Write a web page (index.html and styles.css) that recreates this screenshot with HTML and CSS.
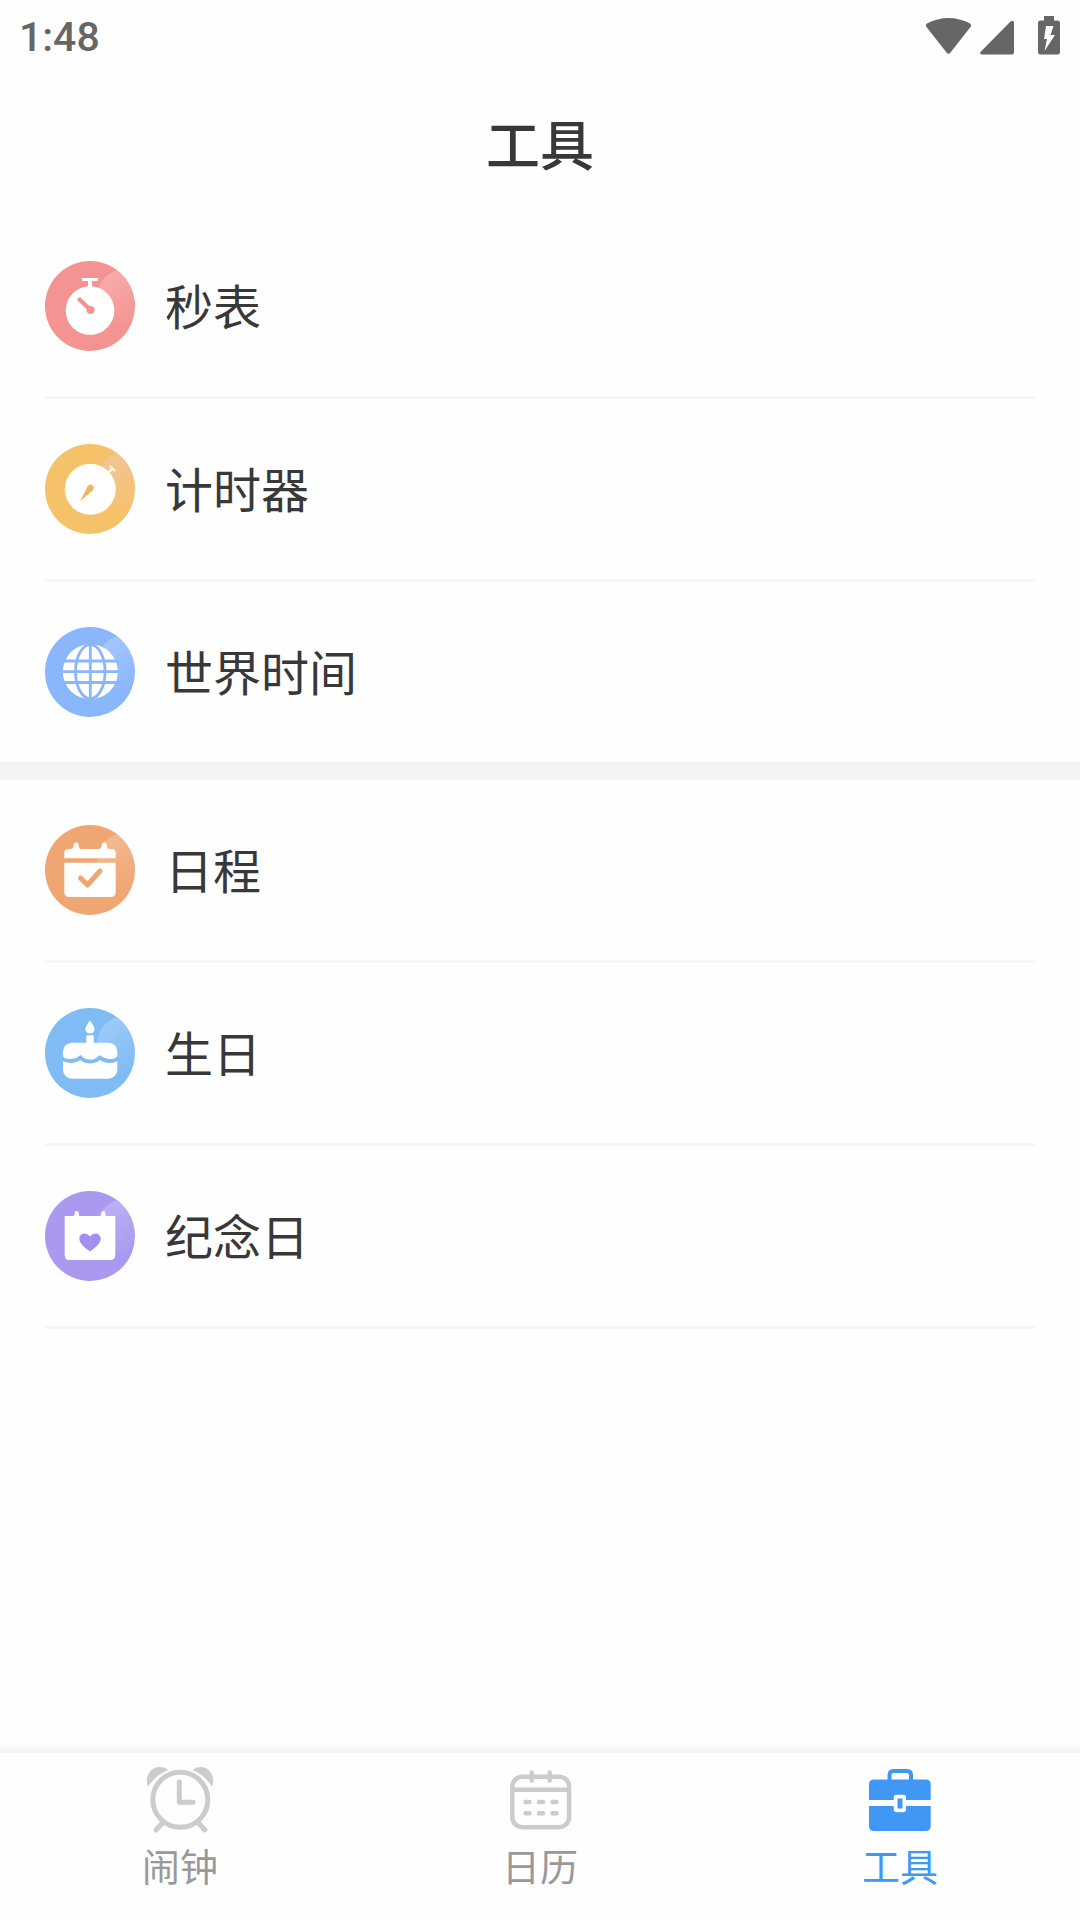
FILE: index.html
```html
<!DOCTYPE html>
<html lang="zh-CN">
<head>
<meta charset="utf-8">
<meta name="viewport" content="width=device-width, initial-scale=1">
<title>工具</title>
<link rel="stylesheet" href="styles.css">
</head>
<body>
<div class="status-bar">
  <span class="clock">1:48</span>
  <svg class="status-icons" viewBox="0 0 136 40" aria-hidden="true">
    <path d="M3 7.500Q24.500-3.500 46 7.500Q48 9 46.500 11L26.500 36.500Q24.500 39 22.500 36.500L2.500 11Q1 9 3 7.500Z"/>
    <path d="M57 35.500L86.500 5.500Q90 3.500 90 7V36.500Q90 38.500 88 38.500H58.500Q54.500 38.500 57 35.500Z"/>
    <path fill-rule="evenodd" d="M120 0h10v4.500h3.500Q136 4.500 136 7v29q0 2.500-2.500 2.500h-17Q114 38.500 114 36V7q0-2.500 2.500-2.500H120ZM122 10l-2 13h3l-2.500 12L131 19h-4.500L129.500 10Z"/>
  </svg>
</div>
<header class="title-bar"><h1>工具</h1></header>
<main>
  <ul class="tool-list">
    <li><a class="tool" href="#stopwatch">
      <svg class="tool-icon" viewBox="0 0 90 90" aria-hidden="true">
        <defs>
          <linearGradient id="shine" x1="0.1" y1="0.1" x2="0.7" y2="0.9"><stop offset="0" stop-color="#fff" stop-opacity=".24"/><stop offset="1" stop-color="#fff" stop-opacity="0"/></linearGradient>
          <linearGradient id="shine-warm" x1="0.1" y1="0.1" x2="0.7" y2="0.9"><stop offset="0" stop-color="#f1c6b4" stop-opacity=".6"/><stop offset="1" stop-color="#f1c6b4" stop-opacity="0.1"/></linearGradient>
          <clipPath id="disc"><circle cx="45" cy="45" r="45"/></clipPath>
        </defs>
        <circle cx="45" cy="45" r="45" fill="#f49492"/>
        <circle cx="80" cy="36" r="28" fill="url(#shine)" clip-path="url(#disc)"/>
        <path d="M36.500 17h17l-1 3H47v6h-4v-6h-5.500Z" fill="#fff"/>
        <circle cx="45" cy="49.500" r="24.300" fill="#fff"/>
        <path d="M34.500 38.500L45 48.500" stroke="#f49492" stroke-width="4.400" stroke-linecap="round"/>
        <circle cx="45.500" cy="49" r="4" fill="#f49492"/>
      </svg>
      <span class="tool-name">秒表</span></a></li>
    <li><a class="tool" href="#timer">
      <svg class="tool-icon" viewBox="0 0 90 90" aria-hidden="true">
        <circle cx="45" cy="45" r="45" fill="#f6c269"/>
        <circle cx="80" cy="36" r="28" fill="url(#shine-warm)" clip-path="url(#disc)"/>
        <circle cx="45.300" cy="45.300" r="25.500" fill="#fff"/>
        <path d="M65 22l5 5M67.500 24.500L63 29" stroke="#fff" stroke-width="2"/>
        <path d="M42.500 42.500A3.300 3.300 0 1 1 48 46L35 57.500Z" fill="#f3b45c"/>
      </svg>
      <span class="tool-name">计时器</span></a></li>
    <li><a class="tool" href="#world">
      <svg class="tool-icon" viewBox="0 0 90 90" aria-hidden="true">
        <circle cx="45" cy="45" r="45" fill="#8ab6fc"/>
        <circle cx="80" cy="36" r="28" fill="url(#shine)" clip-path="url(#disc)"/>
        <circle cx="45.300" cy="44.700" r="27.500" fill="#fff"/>
        <g fill="none" stroke="#8ab6fc" stroke-width="2.800"><ellipse cx="45.300" cy="44.700" rx="14.800" ry="27"/><path d="M45.300 16v57M17 34h57M17 44.700h57M17 55.500h57"/></g>
      </svg>
      <span class="tool-name">世界时间</span></a></li>
  </ul>
  <ul class="tool-list">
    <li><a class="tool" href="#schedule">
      <svg class="tool-icon" viewBox="0 0 90 90" aria-hidden="true">
        <circle cx="45" cy="45" r="45" fill="#efa672"/>
        <circle cx="80" cy="36" r="28" fill="url(#shine)" clip-path="url(#disc)"/>
        <path d="M19.300 33.300V28q0-4 4-4h2q3.400 0 3.400-4a2.500 2.500 0 0 1 5 0q0 4 3 4h17q3 0 3-4a2.500 2.500 0 0 1 5 0q0 4 3 4h2q4 0 4 4v5.300ZM19.300 37.700h51.400V67q0 5-5 5H24.300q-5 0-5-5Z" fill="#fff"/>
        <path d="M35.500 53l7 7L55 46" fill="none" stroke="#efa672" stroke-width="5" stroke-linecap="round" stroke-linejoin="round"/>
      </svg>
      <span class="tool-name">日程</span></a></li>
    <li><a class="tool" href="#birthday">
      <svg class="tool-icon" viewBox="0 0 90 90" aria-hidden="true">
        <circle cx="45" cy="45" r="45" fill="#7fbbf5"/>
        <circle cx="80" cy="36" r="28" fill="url(#shine)" clip-path="url(#disc)"/>
        <path d="M45 12.500Q49.700 18.500 49.500 21.500Q49 25.500 45 25.500Q41 25.500 40.500 21.500Q40.300 18.500 45 12.500ZM41.300 27.300h7.400V35h-7.400Z" fill="#fff"/>
        <rect x="18" y="34.700" width="54.300" height="36" rx="9" fill="#fff"/>
        <path d="M16.500 49.500Q19 53 26 53Q31 53 35.500 49.500Q39 53.500 45.300 53.500Q51 53.500 54.700 49.500Q59 53 64.500 53Q71 53 74 49.500" fill="none" stroke="#7fbbf5" stroke-width="3.800"/>
      </svg>
      <span class="tool-name">生日</span></a></li>
    <li><a class="tool" href="#anniversary">
      <svg class="tool-icon" viewBox="0 0 90 90" aria-hidden="true">
        <circle cx="45" cy="45" r="45" fill="#a99af0"/>
        <circle cx="80" cy="36" r="28" fill="url(#shine)" clip-path="url(#disc)"/>
        <path d="M19.700 25h9q1 0 1-3a2 2 0 0 1 4 0q0 3 1 3h20.600q1 0 1-3a2 2 0 0 1 4 0q0 3 1 3h9v39q0 5-5 5H24.700q-5 0-5-5Z" fill="#fff"/>
        <path d="M45 60.500C41 57.500 34.300 53 34.300 47.500C34.300 42.500 41 40 45 45.500C49 40 55.700 42.500 55.700 47.500C55.700 53 49 57.500 45 60.500Z" fill="#a38fee"/>
      </svg>
      <span class="tool-name">纪念日</span></a></li>
  </ul>
</main>
<nav class="tabs">
  <a class="tab" href="#alarm">
    <svg class="tab-icon" viewBox="0 0 72 72" aria-hidden="true">
      <g fill="none" stroke="#ccc" stroke-width="5" stroke-linecap="round" stroke-linejoin="round"><circle cx="36.300" cy="35.700" r="27.500"/><path d="M35.300 18v20.300H49M18.500 59l-6.500 7M54.500 59l6.500 7"/></g>
      <path d="M4 22.700C0 13 7 2.500 16 3Q21 3.200 24.300 6Q11.500 11 4 22.700ZM68 22.700C72 13 65.500 2.500 56.500 3Q51.500 3.200 48.300 6Q61 11 68 22.700Z" fill="#ccc"/>
    </svg>
    <span>闹钟</span></a>
  <a class="tab" href="#calendar">
    <svg class="tab-icon" viewBox="0 0 72 72" aria-hidden="true">
      <g fill="none" stroke="#ccc" stroke-width="4.500" stroke-linecap="round"><rect x="8.300" y="12.700" width="56.800" height="50.500" rx="10"/><path d="M9 25.700h56M27.700 8.500v8M45.700 8.500v8M21.500 38h4M35 38h4M48.500 38h4M21.500 49.300h4M35 49.300h4M48.500 49.300h4"/></g>
    </svg>
    <span>日历</span></a>
  <a class="tab tab-current" href="#tools" aria-current="page">
    <svg class="tab-icon" viewBox="0 0 72 72" aria-hidden="true">
      <path d="M25.500 18V11q0-4 4-4H43q4 0 4 4v7" fill="none" stroke="#4098f4" stroke-width="4"/>
      <path d="M5 36V20.500q0-5 5-5h51.700q5 0 5 5V36ZM5 42h61.700v20q0 5-5 5H10q-5 0-5-5Z" fill="#4098f4"/>
      <rect x="29.700" y="30.700" width="12.300" height="17.500" rx="3" fill="#fff"/>
      <rect x="33.500" y="34.500" width="5" height="10" fill="#4098f4"/>
    </svg>
    <span>工具</span></a>
</nav>
</body>
</html>
```
FILE: styles.css
```css
* {
  box-sizing: border-box;
}

body {
  margin: 0;
  min-height: 100vh;
  display: flex;
  flex-direction: column;
  background: #fefefe;
  color: #383838;
  font-family: Roboto, "Noto Sans CJK SC", sans-serif;
}

a {
  color: inherit;
  text-decoration: none;
}

.status-bar {
  display: flex;
  align-items: center;
  justify-content: space-between;
  height: 72px;
  padding: 0 20px 0 19px;
  color: #666;
}

.clock {
  padding-top: 2px;
  font-size: 41px;
  font-weight: 500;
}

.status-icons {
  width: 136px;
  height: 40px;
  fill: #666;
}

.title-bar {
  padding: 40px 0 32px;
  text-align: center;
}

.title-bar h1 {
  margin: 0;
  font-size: 54px;
  line-height: 72px;
  font-weight: 500;
}

main {
  flex: 1;
}

.tool-list {
  margin: 0;
  padding: 0 45px;
  list-style: none;
}

.tool-list li {
  border-bottom: 3px solid #f6f6f6;
}

.tool-list:first-child {
  border-bottom: 18px solid #f4f4f4;
}

.tool-list:first-child li:last-child {
  border-bottom: 0;
}

.tool {
  display: flex;
  align-items: center;
  gap: 30px;
  padding: 45px 0;
  font-size: 48px;
  line-height: 72px;
}

.tool-name {
  padding-top: 6px;
}

.tool-icon {
  width: 90px;
  height: 90px;
}

.tabs {
  display: flex;
  padding-top: 8px;
  background: linear-gradient(#fcfcfc, #f3f3f3 8px, #fefefe 8px);
}

.tab {
  flex: 1;
  display: flex;
  flex-direction: column;
  align-items: center;
  padding: 11px 0 20px;
  color: #999;
  font-size: 38px;
  line-height: 64px;
}

.tab-current {
  color: #4098f4;
}

.tab-icon {
  width: 72px;
  height: 72px;
}
```
